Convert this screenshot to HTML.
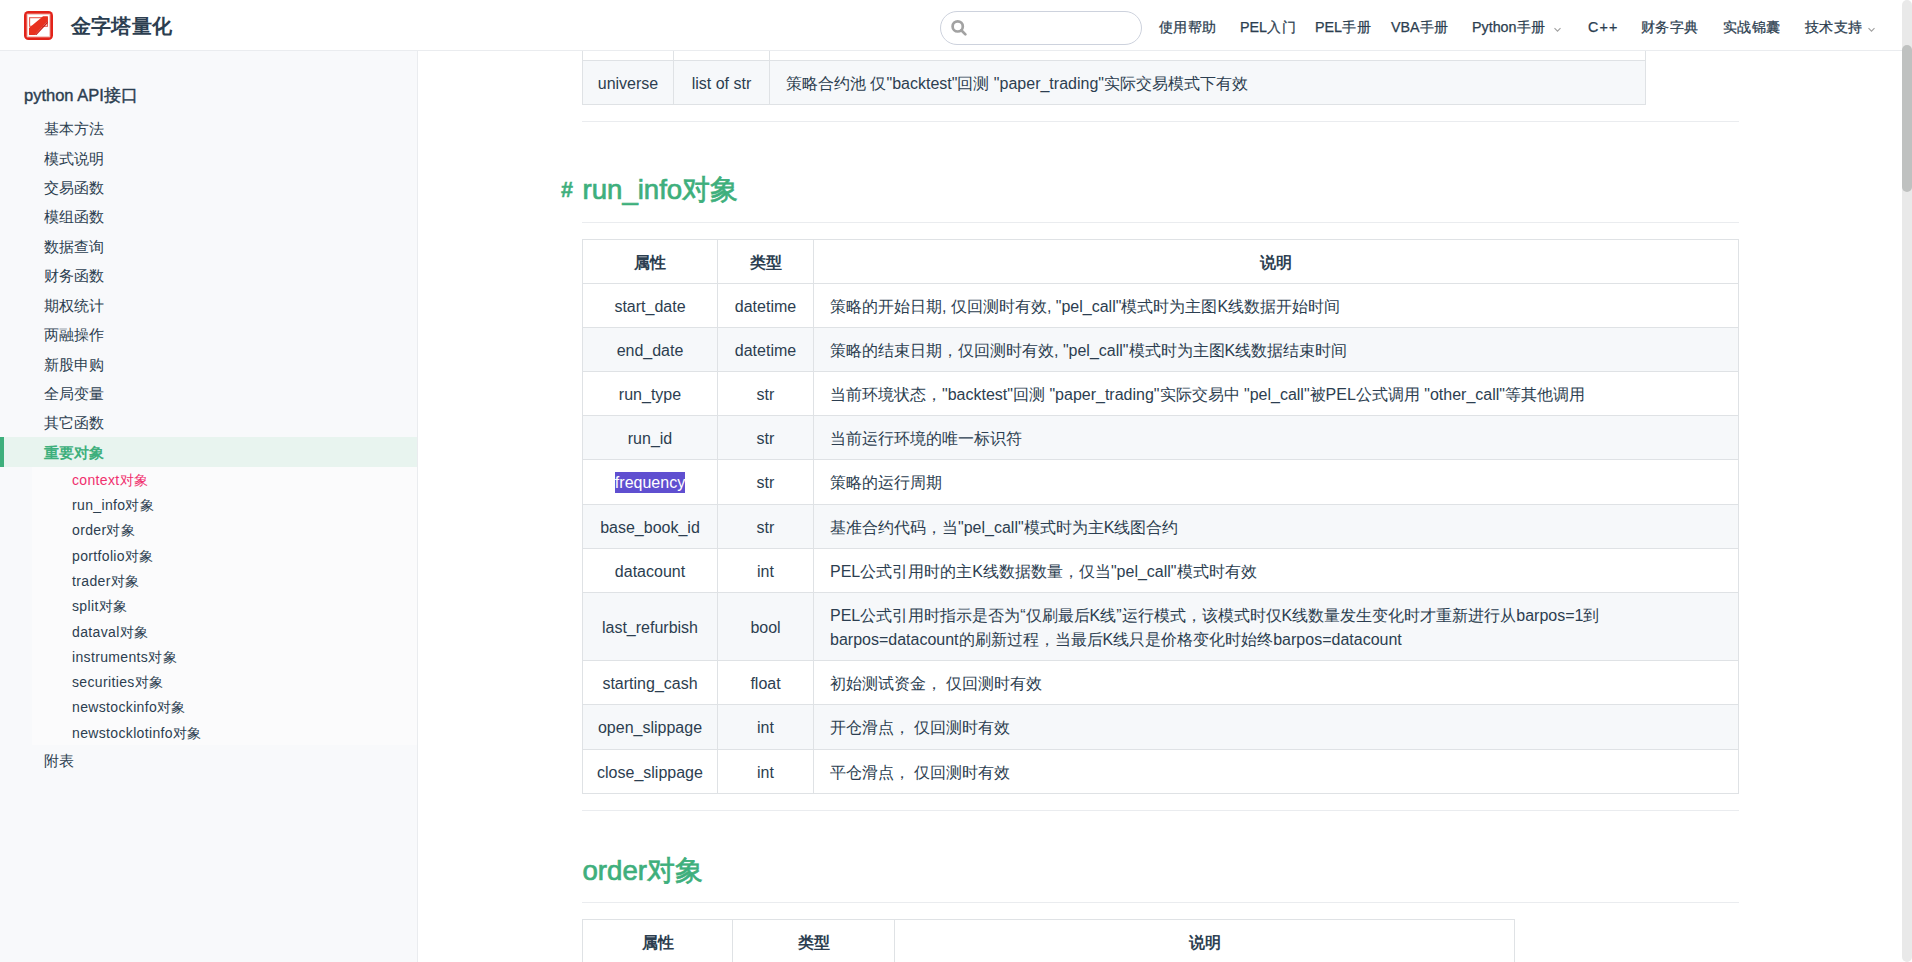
<!DOCTYPE html>
<html><head><meta charset="utf-8">
<style>
*{box-sizing:border-box;}
html,body{margin:0;padding:0;}
body{width:1912px;height:962px;overflow:hidden;position:relative;background:#fff;font-family:"Liberation Sans",sans-serif;color:#2c3e50;}
.a{position:absolute;white-space:nowrap;}
#nav{position:absolute;left:0;top:0;width:1902px;height:51px;background:#fff;border-bottom:1px solid #eaecef;z-index:5;}
#side{position:absolute;left:0;top:51px;width:418px;height:911px;background:#f8f9fb;border-right:1px solid #eaecef;}
.si{position:absolute;left:44px;font-size:15px;line-height:20px;color:#2c3e50;margin-top:0.6px;}
.ss{position:absolute;left:72px;font-size:14px;line-height:18px;color:#2c3e50;letter-spacing:0.35px;margin-top:-0.5px;}
.nl{position:absolute;top:18.1px;font-size:14.3px;line-height:18px;color:#2c3e50;-webkit-text-stroke:0.25px #2c3e50;}
.hl{position:absolute;height:1px;background:#dfe2e5;}
.vl{position:absolute;width:1px;background:#dfe2e5;}
.hr{position:absolute;height:1px;background:#eaecef;left:582px;width:1157px;}
.row{position:absolute;}
.g{background:#f6f8fa;}
.t{position:absolute;font-size:16px;line-height:20px;white-space:nowrap;color:#2c3e50;}
.c{text-align:center;}
.cj{display:inline-block;white-space:nowrap;text-indent:0;text-align:justify;text-align-last:justify;}
.sel{background:#5f4fd0;color:#fff;padding:2px 0;}
.h{font-weight:bold;}
.hd{position:absolute;color:#3eaf7c;font-weight:bold;white-space:nowrap;}
#sb{position:absolute;left:1902px;top:0;width:10px;height:962px;background:#e9e9e9;border-radius:5px;}
#thumb{position:absolute;left:1902px;top:45px;width:10px;height:147px;background:#bfc1c0;border-radius:5px;}
</style></head><body>

<!-- NAVBAR -->
<div id="nav">
  <svg class="a" style="left:24px;top:11px" width="29" height="29" viewBox="0 0 29 29">
    <rect x="0" y="0" width="29" height="29" rx="4.5" fill="#e2231a"/>
    <rect x="2.8" y="2.8" width="23.4" height="23.4" fill="#fff"/>
    <rect x="3.3" y="3.3" width="22.4" height="22.4" fill="none" stroke="#f3b7b0" stroke-width="0.8"/>
    <rect x="5.6" y="6.7" width="17.8" height="8.6" fill="none" stroke="#e95b4f" stroke-width="1.1"/>
    <polygon points="5,17 19,5.2 23.8,5.2 23.8,10 10.8,24 5,24" fill="#e8311f"/>
    <polygon points="10.8,24 23.8,10 23.8,12 12.5,24" fill="#c9201a"/>
  </svg>
  <div class="a" style="left:70.5px;top:14px;font-size:20.3px;line-height:24px;font-weight:bold;color:#2c3e50"><span class="cj" style="width:5em">金字塔量化</span></div>
  <div class="a" style="left:940px;top:11px;width:202px;height:34px;border:1px solid #cdd2dd;border-radius:17px;background:#fff"></div>
  <svg class="a" style="left:949px;top:18px" width="20" height="20" viewBox="0 0 20 20">
    <circle cx="8.7" cy="8.4" r="5.1" fill="none" stroke="#a2a2a2" stroke-width="2.7"/>
    <line x1="12.3" y1="12.3" x2="16.4" y2="16.4" stroke="#a2a2a2" stroke-width="2.7" stroke-linecap="round"/>
  </svg>
  <div class="nl" style="left:1159px"><span class="cj" style="width:4em">使用帮助</span></div>
  <div class="nl" style="left:1240px">PEL<span class="cj" style="width:2em">入门</span></div>
  <div class="nl" style="left:1315px">PEL<span class="cj" style="width:2em">手册</span></div>
  <div class="nl" style="left:1391px">VBA<span class="cj" style="width:2em">手册</span></div>
  <div class="nl" style="left:1472px">Python<span class="cj" style="width:2em">手册</span></div>
  <svg class="a" style="left:1553px;top:27px" width="9" height="6" viewBox="0 0 9 6"><path d="M1.5 1.2 L4.5 4.2 L7.5 1.2" fill="none" stroke="#a0a0a0" stroke-width="1.1"/></svg>
  <div class="nl" style="left:1588px;letter-spacing:1.2px">C++</div>
  <div class="nl" style="left:1641px"><span class="cj" style="width:4em">财务字典</span></div>
  <div class="nl" style="left:1723px"><span class="cj" style="width:4em">实战锦囊</span></div>
  <div class="nl" style="left:1805px"><span class="cj" style="width:4em">技术支持</span></div>
  <svg class="a" style="left:1867px;top:27px" width="9" height="6" viewBox="0 0 9 6"><path d="M1.5 1.2 L4.5 4.2 L7.5 1.2" fill="none" stroke="#a0a0a0" stroke-width="1.1"/></svg>
</div>

<!-- SIDEBAR -->
<div id="side">
  <div class="a" style="left:32px;top:416px;width:385px;height:278px;background:#fbfbfc"></div>
  <div class="a" style="left:0;top:386px;width:417px;height:30px;background:#e8f4ef"></div>
  <div class="a" style="left:0;top:386px;width:4px;height:30px;background:#3eaf7c"></div>
</div>
<div class="a" style="left:24px;top:85px;font-size:16.5px;line-height:20px;-webkit-text-stroke:0.4px #2c3e50">python API<span class="cj" style="width:2em">接口</span></div>
<div class="si" style="top:118px"><span class="cj" style="width:4em">基本方法</span></div>
<div class="si" style="top:148px"><span class="cj" style="width:4em">模式说明</span></div>
<div class="si" style="top:177px"><span class="cj" style="width:4em">交易函数</span></div>
<div class="si" style="top:206px"><span class="cj" style="width:4em">模组函数</span></div>
<div class="si" style="top:236px"><span class="cj" style="width:4em">数据查询</span></div>
<div class="si" style="top:265px"><span class="cj" style="width:4em">财务函数</span></div>
<div class="si" style="top:295px"><span class="cj" style="width:4em">期权统计</span></div>
<div class="si" style="top:324px"><span class="cj" style="width:4em">两融操作</span></div>
<div class="si" style="top:354px"><span class="cj" style="width:4em">新股申购</span></div>
<div class="si" style="top:383px"><span class="cj" style="width:4em">全局变量</span></div>
<div class="si" style="top:412px"><span class="cj" style="width:4em">其它函数</span></div>
<div class="si" style="top:442px;color:#3eaf7c;font-weight:bold"><span class="cj" style="width:4em">重要对象</span></div>
<div class="ss" style="top:471px;color:#f0306e">context<span class="cj" style="width:2em">对象</span></div>
<div class="ss" style="top:496px">run_info<span class="cj" style="width:2em">对象</span></div>
<div class="ss" style="top:521px">order<span class="cj" style="width:2em">对象</span></div>
<div class="ss" style="top:547px">portfolio<span class="cj" style="width:2em">对象</span></div>
<div class="ss" style="top:572px">trader<span class="cj" style="width:2em">对象</span></div>
<div class="ss" style="top:597px">split<span class="cj" style="width:2em">对象</span></div>
<div class="ss" style="top:623px">dataval<span class="cj" style="width:2em">对象</span></div>
<div class="ss" style="top:648px">instruments<span class="cj" style="width:2em">对象</span></div>
<div class="ss" style="top:673px">securities<span class="cj" style="width:2em">对象</span></div>
<div class="ss" style="top:698px">newstockinfo<span class="cj" style="width:2em">对象</span></div>
<div class="ss" style="top:724px">newstocklotinfo<span class="cj" style="width:2em">对象</span></div>
<div class="si" style="top:750px"><span class="cj" style="width:2em">附表</span></div>

<!-- CONTENT -->
<div class="a g" style="left:582px;top:60px;width:1064px;height:44px"></div>
<div class="hl" style="left:582px;top:104px;width:1064px"></div>
<div class="vl" style="left:582px;top:51px;height:54px"></div>
<div class="vl" style="left:673px;top:51px;height:54px"></div>
<div class="vl" style="left:769px;top:51px;height:54px"></div>
<div class="vl" style="left:1645px;top:51px;height:54px"></div>
<div class="t c" style="left:583px;top:73.5px;width:90px">universe</div>
<div class="t c" style="left:674px;top:73.5px;width:95px">list of str</div>
<div class="t" style="left:786px;top:73.5px"><span class="cj" style="width:5em">策略合约池</span> <span class="cj" style="width:1em">仅</span>"backtest"<span class="cj" style="width:2em">回测</span> "paper_trading"<span class="cj" style="width:9em">实际交易模式下有效</span></div>
<div class="hl" style="left:582px;top:60px;width:1064px"></div>
<div class="hr" style="top:121px"></div>
<div class="hd" style="left:561px;top:177.5px;font-size:21.5px;line-height:24px;font-weight:bold;-webkit-text-stroke:0.5px #3eaf7c">#</div>
<div class="hd" style="left:582.5px;top:173.1366px;font-size:27.6px;line-height:34px;font-weight:normal;-webkit-text-stroke:0.7px #3eaf7c">run_info<span class="cj" style="width:2em">对象</span></div>
<div class="hr" style="top:222px"></div>
<div class="a g" style="left:582px;top:327px;width:1157px;height:44px"></div>
<div class="a g" style="left:582px;top:415px;width:1157px;height:44px"></div>
<div class="a g" style="left:582px;top:504px;width:1157px;height:44px"></div>
<div class="a g" style="left:582px;top:592px;width:1157px;height:68px"></div>
<div class="a g" style="left:582px;top:704px;width:1157px;height:45px"></div>
<div class="hl" style="left:582px;top:239px;width:1157px"></div>
<div class="hl" style="left:582px;top:283px;width:1157px"></div>
<div class="hl" style="left:582px;top:327px;width:1157px"></div>
<div class="hl" style="left:582px;top:371px;width:1157px"></div>
<div class="hl" style="left:582px;top:415px;width:1157px"></div>
<div class="hl" style="left:582px;top:459px;width:1157px"></div>
<div class="hl" style="left:582px;top:504px;width:1157px"></div>
<div class="hl" style="left:582px;top:548px;width:1157px"></div>
<div class="hl" style="left:582px;top:592px;width:1157px"></div>
<div class="hl" style="left:582px;top:660px;width:1157px"></div>
<div class="hl" style="left:582px;top:704px;width:1157px"></div>
<div class="hl" style="left:582px;top:749px;width:1157px"></div>
<div class="hl" style="left:582px;top:793px;width:1157px"></div>
<div class="vl" style="left:582px;top:239px;height:555px"></div>
<div class="vl" style="left:717px;top:239px;height:555px"></div>
<div class="vl" style="left:813px;top:239px;height:555px"></div>
<div class="vl" style="left:1738px;top:239px;height:555px"></div>
<div class="t h c" style="left:583px;top:252.5px;width:134px"><span class="cj" style="width:2em">属性</span></div>
<div class="t h c" style="left:718px;top:252.5px;width:95px"><span class="cj" style="width:2em">类型</span></div>
<div class="t h c" style="left:814px;width:924px;top:252.5px"><span class="cj" style="width:2em">说明</span></div>
<div class="t c" style="left:583px;top:296.5px;width:134px">start_date</div>
<div class="t c" style="left:718px;top:296.5px;width:95px">datetime</div>
<div class="t" style="left:830px;top:296.5px"><span class="cj" style="width:7em">策略的开始日期</span>, <span class="cj" style="width:6em">仅回测时有效</span>, "pel_call"<span class="cj" style="width:6em">模式时为主图</span>K<span class="cj" style="width:7em">线数据开始时间</span></div>
<div class="t c" style="left:583px;top:340.5px;width:134px">end_date</div>
<div class="t c" style="left:718px;top:340.5px;width:95px">datetime</div>
<div class="t" style="left:830px;top:340.5px"><span class="cj" style="width:14em">策略的结束日期，仅回测时有效</span>, "pel_call"<span class="cj" style="width:6em">模式时为主图</span>K<span class="cj" style="width:7em">线数据结束时间</span></div>
<div class="t c" style="left:583px;top:384.5px;width:134px">run_type</div>
<div class="t c" style="left:718px;top:384.5px;width:95px">str</div>
<div class="t" style="left:830px;top:384.5px"><span class="cj" style="width:7em">当前环境状态，</span>"backtest"<span class="cj" style="width:2em">回测</span> "paper_trading"<span class="cj" style="width:5em">实际交易中</span> "pel_call"<span class="cj" style="width:1em">被</span>PEL<span class="cj" style="width:4em">公式调用</span> "other_call"<span class="cj" style="width:5em">等其他调用</span></div>
<div class="t c" style="left:583px;top:428.5px;width:134px">run_id</div>
<div class="t c" style="left:718px;top:428.5px;width:95px">str</div>
<div class="t" style="left:830px;top:428.5px"><span class="cj" style="width:12em">当前运行环境的唯一标识符</span></div>
<div class="t c" style="left:583px;top:473.0px;width:134px"><span class="sel">frequency</span></div>
<div class="t c" style="left:718px;top:473.0px;width:95px">str</div>
<div class="t" style="left:830px;top:473.0px"><span class="cj" style="width:7em">策略的运行周期</span></div>
<div class="t c" style="left:583px;top:517.5px;width:134px">base_book_id</div>
<div class="t c" style="left:718px;top:517.5px;width:95px">str</div>
<div class="t" style="left:830px;top:517.5px"><span class="cj" style="width:8em">基准合约代码，当</span>"pel_call"<span class="cj" style="width:5em">模式时为主</span>K<span class="cj" style="width:4em">线图合约</span></div>
<div class="t c" style="left:583px;top:561.5px;width:134px">datacount</div>
<div class="t c" style="left:718px;top:561.5px;width:95px">int</div>
<div class="t" style="left:830px;top:561.5px">PEL<span class="cj" style="width:7em">公式引用时的主</span>K<span class="cj" style="width:8em">线数据数量，仅当</span>"pel_call"<span class="cj" style="width:5em">模式时有效</span></div>
<div class="t c" style="left:583px;top:617.5px;width:134px">last_refurbish</div>
<div class="t c" style="left:718px;top:617.5px;width:95px">bool</div>
<div class="t" style="left:830px;top:603.5px;line-height:24px">PEL<span class="cj" style="width:10em">公式引用时指示是否为</span>“<span class="cj" style="width:4em">仅刷最后</span>K<span class="cj" style="width:1em">线</span>”<span class="cj" style="width:10em">运行模式，该模式时仅</span>K<span class="cj" style="width:14em">线数量发生变化时才重新进行从</span>barpos=1<span class="cj" style="width:1em">到</span><br>barpos=datacount<span class="cj" style="width:9em">的刷新过程，当最后</span>K<span class="cj" style="width:10em">线只是价格变化时始终</span>barpos=datacount</div>
<div class="t c" style="left:583px;top:673.5px;width:134px">starting_cash</div>
<div class="t c" style="left:718px;top:673.5px;width:95px">float</div>
<div class="t" style="left:830px;top:673.5px"><span class="cj" style="width:7em">初始测试资金，</span> <span class="cj" style="width:6em">仅回测时有效</span></div>
<div class="t c" style="left:583px;top:718.0px;width:134px">open_slippage</div>
<div class="t c" style="left:718px;top:718.0px;width:95px">int</div>
<div class="t" style="left:830px;top:718.0px"><span class="cj" style="width:5em">开仓滑点，</span> <span class="cj" style="width:6em">仅回测时有效</span></div>
<div class="t c" style="left:583px;top:762.5px;width:134px">close_slippage</div>
<div class="t c" style="left:718px;top:762.5px;width:95px">int</div>
<div class="t" style="left:830px;top:762.5px"><span class="cj" style="width:5em">平仓滑点，</span> <span class="cj" style="width:6em">仅回测时有效</span></div>
<div class="hr" style="top:810px"></div>
<div class="hd" style="left:582.5px;top:853.6366px;font-size:27.6px;line-height:34px;font-weight:normal;-webkit-text-stroke:0.7px #3eaf7c">order<span class="cj" style="width:2em">对象</span></div>
<div class="hr" style="top:902px"></div>
<div class="hl" style="left:582px;top:919px;width:933px"></div>
<div class="hl" style="left:582px;top:963px;width:933px"></div>
<div class="vl" style="left:582px;top:919px;height:45px"></div>
<div class="vl" style="left:732px;top:919px;height:45px"></div>
<div class="vl" style="left:894px;top:919px;height:45px"></div>
<div class="vl" style="left:1514px;top:919px;height:45px"></div>
<div class="t h c" style="left:583px;top:932.5px;width:149px"><span class="cj" style="width:2em">属性</span></div>
<div class="t h c" style="left:733px;top:932.5px;width:161px"><span class="cj" style="width:2em">类型</span></div>
<div class="t h c" style="left:895px;top:932.5px;width:619px"><span class="cj" style="width:2em">说明</span></div>

<div id="sb"></div>
<div id="thumb"></div>
</body></html>
